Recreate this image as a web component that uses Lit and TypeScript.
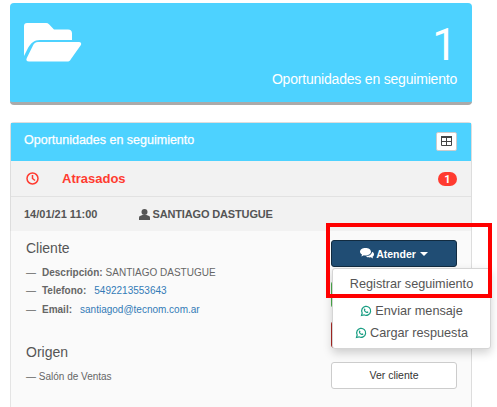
import { LitElement, html, css, svg } from "lit";
import { customElement } from "lit/decorators.js";

const wa = svg`<svg class="wa" viewBox="0 0 24 24" width="12" height="12"><path fill="none" stroke="#1a9e83" stroke-width="2.4" d="M3 21l1.400-5A9 9 0 1 1 8 19.600z"/><path fill="#1a9e83" d="M8.600 7.400c.5-.5 1.200-.5 1.500.1l.8 1.700c.1.400 0 .7-.3 1l-.5.6c.7 1.300 1.700 2.200 3 2.900l.7-.7c.3-.3.6-.3 1-.2l1.600.8c.5.3.5 1 .1 1.500-.8 1-2 1.200-3.300.8-2.600-.8-4.700-2.900-5.400-5.400-.3-1.100 0-2.200.8-3.100z"/></svg>`;

@customElement("app-root")
export class AppRoot extends LitElement {
  static styles = css`
    :host { display: block; width: 497px; height: 407px; overflow: hidden; position: relative; font-family: "Liberation Sans", Arial, sans-serif; background: #fff; color: #555; }
    .page { padding: 3px 25px 0 10px; display: flex; flex-direction: column; gap: 17px; }
    .hero { height: 102px; box-sizing: border-box; background: #4dd2ff; border-bottom: 3px solid #aaa; border-radius: 4px; display: flex; justify-content: space-between; padding: 20px 15px 0 14px; color: #fff; }
    .hero svg { display: block; }
    .hero-r { display: flex; flex-direction: column; align-items: flex-end; }
    .num { font-family: Roboto, sans-serif; font-size: 44px; line-height: 44px; }
    .hero-t { font-size: 14px; line-height: 16px; margin-top: 4px; letter-spacing: -0.2px; }
    .panel { border: solid #ddd; border-width: 1px 1px 0 1px; border-radius: 4px 4px 0 0; }
    .ph { height: 38px; background: #4dd2ff; color: #fff; display: flex; justify-content: space-between; align-items: center; padding: 0 14px 4px 13px; box-sizing: border-box; font-size: 12.500px; -webkit-text-stroke: 0.25px #fff; }
    .tb { width: 21px; height: 19px; box-sizing: border-box; background: #fff; border: 1px solid #ccc; border-radius: 2px; display: flex; align-items: center; justify-content: center; margin-top: 2px; }
    .late { height: 36px; background: #f2f2f2; border-bottom: 1px solid #e2e2e2; box-sizing: border-box; display: flex; align-items: center; padding: 0 14px 0 15px; color: #ff3b30; font-size: 13px; font-weight: 700; }
    .late svg { margin-right: 23px; }
    .late span.l { flex: 1; }
    .badge { background: #ff3b30; color: #fff; font-family: Roboto, sans-serif; font-size: 11px; font-weight: 700; width: 19px; height: 14px; border-radius: 7px; display: flex; align-items: center; justify-content: center; margin-top: 1px; }
    .date { height: 34px; background: #f2f2f2; display: flex; align-items: center; padding: 0 0 0 13px; font-size: 11px; font-weight: 700; color: #555; }
    .date .d { width: 114.500px; }
    .date .n { display: flex; align-items: center; gap: 3px; letter-spacing: -0.15px; }
    .body { background: #fafafa; height: 176px; display: flex; justify-content: space-between; padding: 9px 14px 0 15px; box-sizing: border-box; border-left: 1px solid #e4e4e4; margin-left: -1px; }
    h4 { margin: 0; font-size: 14px; line-height: 16px; font-weight: 400; color: #555; }
    .lines { margin: 7px 0 0; padding: 0; list-style: none; font-size: 10px; color: #666; }
    .lines li { height: 18.500px; display: flex; align-items: center; white-space: pre; }
    .lines b { color: #666; font-weight: 700; margin: 0 3px 0 6px; }
    .lines a { color: #337ab7; margin-left: 5px; }
    .origen { margin-top: 25px; }
    .sal { margin: 11px 0 0; font-size: 10px; color: #666; }
    .col { display: flex; flex-direction: column; gap: 13.500px; position: relative; width: 126px; }
    .btn { height: 27px; box-sizing: border-box; border-radius: 3px; display: flex; align-items: center; justify-content: center; font-size: 10.500px; border: 1px solid #ccc; background: #fff; color: #333; }
    .primary { background: #204d74; border-color: #122b40; color: #fff; font-weight: 700; gap: 2px; }
    .green { background: #5cb85c; border-color: #4cae4c; }
    .red { background: #c9302c; border-color: #ac2925; }
    .caret { width: 0; height: 0; border: 4px solid transparent; border-top-color: #fff; border-bottom: 0; margin-left: 2px; }
    .menu { position: absolute; left: 1px; top: 28px; width: 159px; height: 81px; box-sizing: border-box; background: #fff; border: 1px solid #d5d5d5; border-radius: 3px; box-shadow: 0 4px 10px rgba(0,0,0,.18); font-size: 12.700px; color: #555; padding: 2px 0 0; display: flex; flex-direction: column; align-items: center; }
    .menu div { height: 22px; display: flex; align-items: center; gap: 3px; white-space: nowrap; }
    .menu div.f { height: 26px; margin-bottom: 2.500px; }
    .wa { display: block; }
    .mark { position: absolute; left: 326px; top: 223px; width: 166px; height: 75px; box-sizing: border-box; border: 4px solid #ff0000; pointer-events: none; }
  `;
  render() {
    return html`
      <div class="page">
        <div class="hero">
          <svg viewBox="0 0 58 39" width="58" height="39" fill="#fff">
            <path d="M0 33V3a3 3 0 0 1 3-3h19a4 4 0 0 1 3 1.300L30 6.500h14a4 4 0 0 1 4 4V17H16C10 17 7 20 4 25z"/>
            <path d="M14 19h41c2 0 2.700 1.500 1.900 3L47 36c-1 2-2 2.500-4 2.500H5c-2.500 0-3.200-1.500-2.200-3.500L9 22.500c1-2 2.500-3.500 5-3.500z"/>
          </svg>
          <div class="hero-r">
            <div class="num">1</div>
            <div class="hero-t">Oportunidades en seguimiento</div>
          </div>
        </div>
        <div class="panel">
          <div class="ph">
            <span>Oportunidades en seguimiento</span>
            <span class="tb"><svg width="11" height="10" viewBox="0 0 11 10"><path fill="none" stroke="#444" d="M.5.500h10v9H.500zM.5 5.500h10M5.500 1v8.500"/><path fill="#444" d="M0 0h11v2H0z"/></svg></span>
          </div>
          <div class="late">
            <svg width="13" height="13" viewBox="0 0 13 13" fill="none" stroke="#ff3b30" stroke-width="1.500"><circle cx="6.500" cy="6.500" r="5.500"/><path d="M6.500 3v3.500l2.500 2"/></svg>
            <span class="l">Atrasados</span>
            <span class="badge">1</span>
          </div>
          <div class="date">
            <span class="d">14/01/21 11:00</span>
            <span class="n">
              <svg width="11" height="11" viewBox="0 0 11 11" fill="#555"><circle cx="5.500" cy="3" r="3"/><path d="M0 11V8.500C0 7 1.500 6.500 3.500 6h4C9.500 6.500 11 7 11 8.500V11z"/></svg>
              SANTIAGO DASTUGUE
            </span>
          </div>
          <div class="body">
            <div>
              <h4>Cliente</h4>
              <ul class="lines">
                <li>—<b>Descripción:</b>SANTIAGO DASTUGUE</li>
                <li>—<b>Telefono:</b><a>5492213553643</a></li>
                <li>—<b>Email:</b><a>santiagod@tecnom.com.ar</a></li>
              </ul>
              <h4 class="origen">Origen</h4>
              <p class="sal">— Salón de Ventas</p>
            </div>
            <div class="col">
              <div class="btn primary">
                <svg width="14" height="11" viewBox="0 0 14 11" fill="#fff"><path d="M5.500 0C8.500 0 11 1.600 11 3.700S8.500 7.400 5.500 7.400c-.6 0-1.100 0-1.600-.2L1.400 8.500 2 6.400C.8 5.700 0 4.800 0 3.700 0 1.600 2.500 0 5.500 0z"/><path d="M12 3.800c1.300.6 2 1.500 2 2.600 0 1-.6 1.800-1.500 2.400l.6 1.700-2.300-1.200c-1.800.3-3.800-.1-4.800-1.100 3 0 6-1.700 6-4.400z"/></svg>
                Atender<span class="caret"></span>
              </div>
              <div class="btn green"></div>
              <div class="btn red"></div>
              <div class="btn">Ver cliente</div>
              <div class="menu">
                <div class="f">Registrar seguimiento</div>
                <div>${wa}Enviar mensaje</div>
                <div>${wa}Cargar respuesta</div>
              </div>
            </div>
          </div>
        </div>
      </div>
      <div class="mark"></div>
    `;
  }
}
